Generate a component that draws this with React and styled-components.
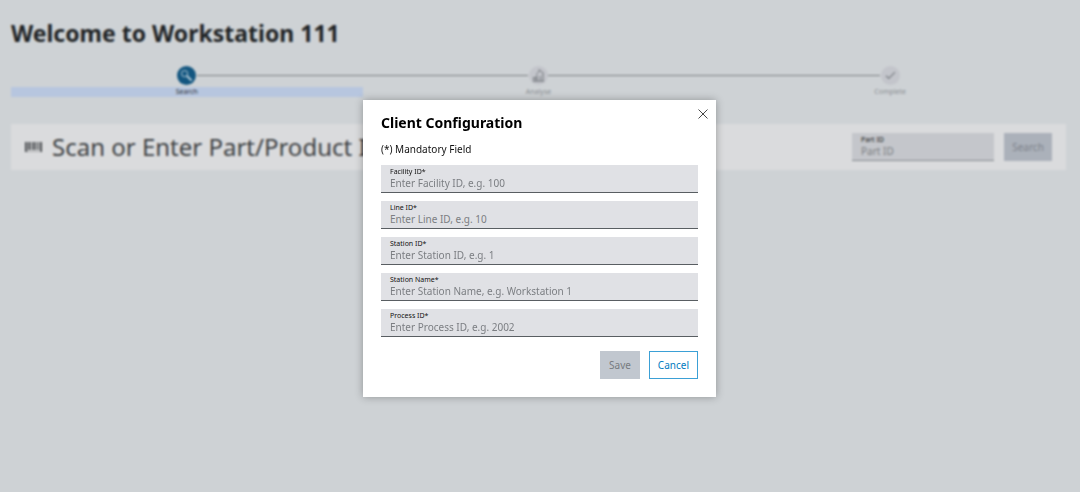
import { useState } from "react";
import styled, { createGlobalStyle } from "styled-components";

const steps = [
  { id: "search", label: "Search" },
  { id: "analyse", label: "Analyse" },
  { id: "complete", label: "Complete" },
];

const fields = [
  { id: "facilityId", label: "Facility ID*", placeholder: "Enter Facility ID, e.g. 100" },
  { id: "lineId", label: "Line ID*", placeholder: "Enter Line ID, e.g. 10" },
  { id: "stationId", label: "Station ID*", placeholder: "Enter Station ID, e.g. 1" },
  { id: "stationName", label: "Station Name*", placeholder: "Enter Station Name, e.g. Workstation 1" },
  { id: "processId", label: "Process ID*", placeholder: "Enter Process ID, e.g. 2002" },
];

function StepIcon({ id }) {
  if (id === "search")
    return (
      <svg width="13" height="13" viewBox="0 0 13 13" fill="none" stroke="#b4cbd8">
        <circle cx="4.6" cy="4.6" r="3.1" strokeWidth="1" />
        <path d="M7 7 11.6 11.6" strokeWidth="2" />
      </svg>
    );
  if (id === "analyse")
    return (
      <svg width="13" height="13" viewBox="0 0 13 13" fill="none" stroke="#7c8085">
        <path d="M1.6 12V8.6h2.6V12M4.9 12V6.2M8.2 12V7M11 12V3.4M1 12.2h11" strokeWidth="1.2" />
        <path d="M4.2 5.8 7.6 1.6 11 3.6M6.2 1.2h2.4" strokeWidth="1" />
      </svg>
    );
  return (
    <svg width="13" height="13" viewBox="0 0 13 13" fill="none" stroke="#7c8085">
      <path d="M2 6.8 4.8 9.4 11 3.2" strokeWidth="1.2" />
    </svg>
  );
}

export default function App() {
  const [open, setOpen] = useState(true);
  const [values, setValues] = useState({});
  const complete = fields.every((f) => values[f.id]);

  const handleChange = (e) =>
    setValues({ ...values, [e.target.id]: e.target.value });

  return (
    <>
      <GlobalStyle />
      <Page>
        <PageTitle>Welcome to Workstation 111</PageTitle>

        <Stepper>
          {steps.map((s, i) => (
            <Step key={s.id} $last={i === steps.length - 1}>
              <StepCircle $active={i === 0}>
                <StepIcon id={s.id} />
              </StepCircle>
              <StepLabel $active={i === 0}>{s.label}</StepLabel>
            </Step>
          ))}
        </Stepper>

        <ScanPanel>
          <Barcode width="17" height="10" viewBox="0 0 17 10" fill="#4a4d50">
            <path d="M0 0h2v10H0zM3 0h2v8H3zM6 0h1v8H6zM8 0h2v8H8zM11 0h1v8h-1zM13 0h1v8h-1zM15 0h2v10h-2zM3 9h1v1H3zM6 9h1v1H6zM9 9h1v1H9zM12 9h1v1h-1z" />
          </Barcode>
          <ScanTitle>Scan or Enter Part/Product ID</ScanTitle>
          <PartField>
            <FieldLabel htmlFor="partId">Part ID</FieldLabel>
            <FieldInput id="partId" placeholder="Part ID" />
          </PartField>
          <SearchButton type="button" disabled>
            Search
          </SearchButton>
        </ScanPanel>
      </Page>

      {open && (
        <Backdrop>
          <Dialog role="dialog" aria-labelledby="dialogTitle">
            <DialogHeader>
              <DialogTitle id="dialogTitle">Client Configuration</DialogTitle>
              <CloseButton type="button" aria-label="Close" onClick={() => setOpen(false)}>
                <svg width="10" height="10" viewBox="0 0 10 10" fill="none" stroke="#333">
                  <path d="M.5.5 9.5 9.5M9.5.5.5 9.5" strokeWidth="0.9" />
                </svg>
              </CloseButton>
            </DialogHeader>
            <Hint>(*) Mandatory Field</Hint>

            <Fields>
              {fields.map((f) => (
                <Field key={f.id}>
                  <FieldLabel htmlFor={f.id}>{f.label}</FieldLabel>
                  <FieldInput
                    id={f.id}
                    placeholder={f.placeholder}
                    value={values[f.id] || ""}
                    onChange={handleChange}
                  />
                </Field>
              ))}
            </Fields>

            <Actions>
              <SaveButton type="button" disabled={!complete}>
                Save
              </SaveButton>
              <CancelButton type="button" onClick={() => setOpen(false)}>
                Cancel
              </CancelButton>
            </Actions>
          </Dialog>
        </Backdrop>
      )}
    </>
  );
}

// ---------------- styled-components ----------------

const GlobalStyle = createGlobalStyle`
  * {
    box-sizing: border-box;
  }

  body {
    margin: 0;
    background: #ced2d5;
    color: #000;
    font-family: "Noto Sans", "Open Sans", sans-serif;
  }

  button,
  input {
    font-family: inherit;
  }
`;

const Page = styled.main`
  min-height: 100vh;
  padding: 16px 14px 16px 11px;
`;

const PageTitle = styled.h1`
  margin: 0;
  font-size: 23px;
  line-height: 34px;
  font-weight: 700;
  color: #202325;
`;

// Stepper
const Stepper = styled.ol`
  display: grid;
  grid-template-columns: repeat(3, 1fr);
  margin: 16px 0 27px;
  padding: 0;
  list-style: none;
`;

const Step = styled.li`
  position: relative;
  display: flex;
  flex-direction: column;
  align-items: center;
  gap: 2px;

  /* connector to the next step */
  &::after {
    content: "";
    display: ${({ $last }) => ($last ? "none" : "block")};
    position: absolute;
    top: 9px;
    left: calc(50% + 10px);
    width: calc(100% - 20px);
    height: 1px;
    background: #7c8083;
  }
`;

const StepCircle = styled.span`
  display: flex;
  align-items: center;
  justify-content: center;
  width: 19px;
  height: 19px;
  border-radius: 50%;
  background: ${({ $active }) => ($active ? "#135680" : "#c3c5cb")};
`;

const StepLabel = styled.span`
  width: 100%;
  font-size: 7px;
  line-height: 10px;
  text-align: center;
  color: ${({ $active }) => ($active ? "#2c3138" : "#8a8e92")};
  background: ${({ $active }) => ($active ? "#b7c6df" : "transparent")};
`;

// Scan panel
const ScanPanel = styled.section`
  display: flex;
  align-items: center;
  padding: 9px 14px;
  background: #dadbdd;
`;

const Barcode = styled.svg`
  flex: none;
  margin-right: 10px;
`;

const ScanTitle = styled.h2`
  flex: 1;
  margin: 0;
  font-size: 24px;
  line-height: 28px;
  font-weight: 400;
  color: #3c3f42;
`;

const Field = styled.div`
  display: flex;
  flex-direction: column;
  height: 28px;
  padding: 2px 9px 1px;
  background: #e0e1e5;
  border-bottom: 1px solid #595e62;
`;

const PartField = styled(Field)`
  width: 142px;
  margin-right: 10px;
  background: #c4c6cb;
  border-bottom-color: #85898e;
`;

const FieldLabel = styled.label`
  font-size: 7px;
  line-height: 9px;
  color: #111;
`;

const FieldInput = styled.input`
  width: 100%;
  height: 14px;
  padding: 0;
  border: 0;
  outline: 0;
  background: transparent;
  font-size: 10px;
  line-height: 14px;

  &::placeholder {
    color: #7b7e82;
    opacity: 1;
  }
`;

const Button = styled.button`
  height: 28px;
  padding: 0 8px;
  border: 1px solid transparent;
  font-size: 10px;
  line-height: 14px;
`;

const SearchButton = styled(Button)`
  width: 48px;
  padding: 0;
  background: #abb1ba;
  color: #7d828a;
`;

// Dialog
const Backdrop = styled.div`
  position: fixed;
  inset: 0;
  display: flex;
  align-items: center;
  justify-content: center;
  padding: 4px 1px 0 0;
  backdrop-filter: blur(1px);
`;

const Dialog = styled.section`
  width: 100%;
  max-width: 353px;
  padding: 9px 18px 18px;
  background: #fff;
  box-shadow: 0 0 8px rgba(0, 0, 0, 0.3);
`;

const DialogHeader = styled.header`
  display: flex;
  justify-content: space-between;
`;

const DialogTitle = styled.h2`
  margin: 0;
  padding-top: 4px;
  font-size: 14px;
  line-height: 20px;
  font-weight: 700;
`;

const CloseButton = styled.button`
  display: flex;
  height: 10px;
  margin-right: -10px;
  padding: 0;
  border: 0;
  background: transparent;
  cursor: pointer;
`;

const Hint = styled.p`
  margin: 9px 0;
  font-size: 10px;
  line-height: 14px;
  color: #111;
`;

const Fields = styled.div`
  display: flex;
  flex-direction: column;
  gap: 8px;
`;

const Actions = styled.footer`
  display: flex;
  justify-content: flex-end;
  gap: 9px;
  margin-top: 14px;
`;

const SaveButton = styled(Button)`
  background: #c1c7cf;
  color: #777b80;
`;

const CancelButton = styled(Button)`
  background: #fff;
  border-color: #3ba0d6;
  color: #007bc0;
  cursor: pointer;
`;
